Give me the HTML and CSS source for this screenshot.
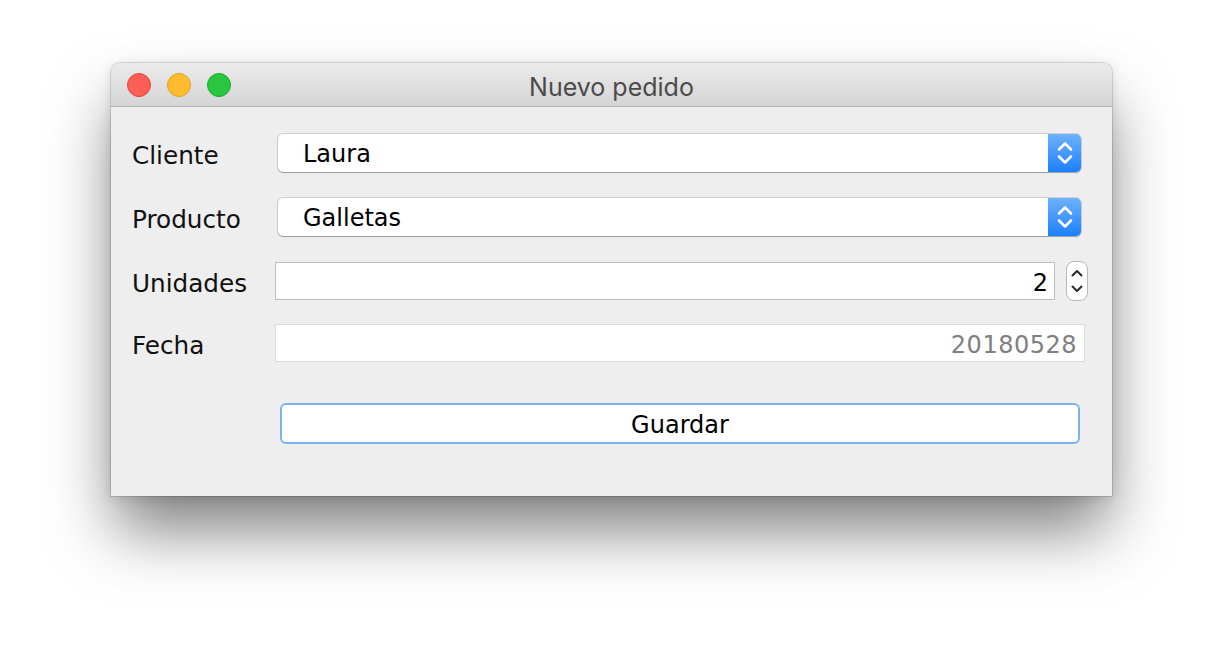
FILE: index.html
```html
<!DOCTYPE html>
<html lang="es">
<head>
<meta charset="utf-8">
<title>Nuevo pedido</title>
<link rel="stylesheet" href="styles.css">
</head>
<body>
<div class="window">
  <div class="titlebar">
    <div class="lights">
      <span class="light red"></span>
      <span class="light yellow"></span>
      <span class="light green"></span>
    </div>
    <div class="title">Nuevo pedido</div>
  </div>
  <div class="content">
    <div class="row row-combo">
      <label class="label">Cliente</label>
      <div class="combo">
        <span class="combo-text">Laura</span>
        <span class="combo-arrow">
          <svg width="16" height="24" viewBox="0 0 16 24"><path d="M2 8.5 L8 2.5 L14 8.5 M2 15.5 L8 21.5 L14 15.5" fill="none" stroke="#fff" stroke-width="2.6" stroke-linecap="round" stroke-linejoin="round"/></svg>
        </span>
      </div>
    </div>
    <div class="row row-combo row2">
      <label class="label">Producto</label>
      <div class="combo">
        <span class="combo-text">Galletas</span>
        <span class="combo-arrow">
          <svg width="16" height="24" viewBox="0 0 16 24"><path d="M2 8.5 L8 2.5 L14 8.5 M2 15.5 L8 21.5 L14 15.5" fill="none" stroke="#fff" stroke-width="2.6" stroke-linecap="round" stroke-linejoin="round"/></svg>
        </span>
      </div>
    </div>
    <div class="row row-spin">
      <label class="label">Unidades</label>
      <div class="field field-num">2</div>
      <div class="spinner">
        <svg width="12" height="26" viewBox="0 0 12 26"><path d="M1.5 7.5 L6 3 L10.5 7.5 M1.5 18.5 L6 23 L10.5 18.5" fill="none" stroke="#2a2a2a" stroke-width="2" stroke-linecap="round" stroke-linejoin="round"/></svg>
      </div>
    </div>
    <div class="row row-date">
      <label class="label">Fecha</label>
      <div class="field field-date">20180528</div>
    </div>
    <div class="row row-button">
      <button class="button">Guardar</button>
    </div>
  </div>
</div>
</body>
</html>
```

FILE: styles.css
```css
html, body {
  margin: 0;
  padding: 0;
  background: #ffffff;
}

body {
  box-sizing: border-box;
  min-height: 656px;
  padding: 63px 0 0 111px;
  font-family: "DejaVu Sans", "Liberation Sans", sans-serif;
}

.window {
  width: 1001px;
  height: 433px;
  background: #eeeeee;
  border-radius: 9px 9px 0 0;
  box-shadow: 0 0 0 1px rgba(0, 0, 0, 0.12), 0 2px 12px rgba(0, 0, 0, 0.12), 0 38px 64px -4px rgba(0, 0, 0, 0.5);
  overflow: hidden;
  display: flex;
  flex-direction: column;
}

.titlebar {
  height: 43px;
  flex: none;
  position: relative;
  background: linear-gradient(#ebebeb, #d5d5d5);
  border-bottom: 1px solid #b3b3b3;
  display: flex;
  align-items: center;
  justify-content: center;
}

.lights {
  position: absolute;
  left: 16px;
  top: 10px;
  display: flex;
  gap: 16px;
}

.light {
  width: 22px;
  height: 22px;
  border-radius: 50%;
  border: 1px solid;
}

.red { background: #fd5f57; border-color: #e1463f; }
.yellow { background: #febc2e; border-color: #dfa023; }
.green { background: #29c740; border-color: #1cab2b; }

.title {
  font-family: "Inter", "Roboto", sans-serif;
  font-size: 25px;
  color: #4b4b4b;
  margin-top: 4px;
}

.content {
  padding: 26px 0 0 21px;
  display: flex;
  flex-direction: column;
}

.row {
  display: flex;
  align-items: center;
}

.label {
  width: 143px;
  flex: none;
  font-size: 24.7px;
  color: #111;
  padding-top: 5px;
}

.row-combo {
  height: 40px;
}

.row2 {
  margin-top: 24px;
}

.combo {
  margin-left: 3px;
  width: 803px;
  height: 38px;
  background: #fff;
  border-radius: 5px;
  box-shadow: 0 0 0 1px rgba(0, 0, 0, 0.12), 0 1px 1px rgba(0, 0, 0, 0.25);
  display: flex;
  align-items: center;
  overflow: hidden;
}

.combo-text {
  flex: 1;
  padding-left: 25px;
  font-size: 24px;
  color: #000;
  padding-top: 1px;
}

.combo-arrow {
  width: 33px;
  height: 100%;
  background: linear-gradient(#6db2fc, #1b80fb);
  display: flex;
  align-items: center;
  justify-content: center;
}

.row-spin {
  margin-top: 24px;
  height: 40px;
}

.field {
  height: 33px;
  padding-top: 3px;
  background: #fff;
  border: 1px solid #bdbdbd;
  font-size: 24px;
  display: flex;
  align-items: center;
  justify-content: flex-end;
  box-sizing: content-box;
}

.field-num {
  width: 772px;
  padding-right: 6px;
  color: #000;
}

.spinner {
  margin-left: 11px;
  width: 20px;
  height: 38px;
  background: #fff;
  border: 1px solid #b9b9b9;
  border-radius: 8px;
  display: flex;
  align-items: center;
  justify-content: center;
}

.row-date {
  margin-top: 23px;
  height: 38px;
}

.field-date {
  width: 801px;
  padding-right: 7px;
  border-color: #dadada;
  color: #808080;
  letter-spacing: 0.5px;
}

.row-button {
  margin-top: 41px;
  padding-left: 148px;
}

.button {
  width: 800px;
  height: 41px;
  background: #fff;
  border: 2px solid #7eb0f0;
  border-radius: 6px;
  font-family: "DejaVu Sans", "Liberation Sans", sans-serif;
  font-size: 24px;
  color: #000;
  padding: 3px 0 0 0;
}
```
